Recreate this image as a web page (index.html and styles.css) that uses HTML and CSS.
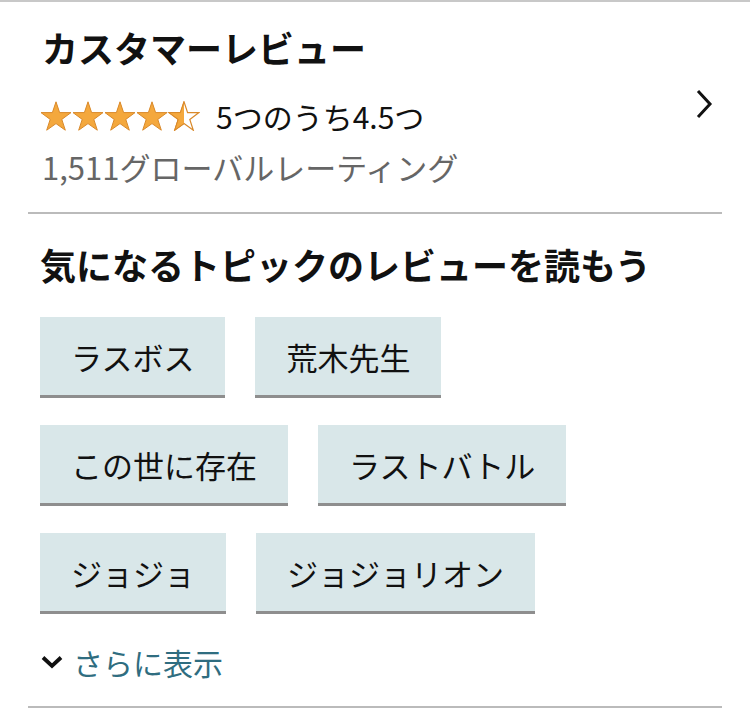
FILE: index.html
```html
<!DOCTYPE html>
<html lang="ja">
<head>
    <meta charset="UTF-8">
    <meta name="viewport" content="width=device-width, initial-scale=1.0">
    <title>カスタマーレビュー</title>
    <link rel="stylesheet" href="styles.css">
</head>
<body>
    <div class="reviews">
        <div class="summary">
            <h2 class="title">カスタマーレビュー</h2>
            <div class="rating-row">
                <div class="rating">
                    <svg class="stars" width="160" height="30" viewBox="0 0 160 30">
                        <defs>
                            <path id="star" d="M16 0.8 L19.6 11.6 L31 11.6 L21.8 18.4 L25.3 29.2 L16 22.6 L6.7 29.2 L10.2 18.4 L1 11.6 L12.4 11.6 Z"/>
                            <clipPath id="half"><rect x="0" y="0" width="16" height="30"/></clipPath>
                        </defs>
                        <use href="#star" class="star-full" x="0"/>
                        <use href="#star" class="star-full" x="32"/>
                        <use href="#star" class="star-full" x="64"/>
                        <use href="#star" class="star-full" x="96"/>
                        <g transform="translate(128 0)">
                            <use href="#star" class="star-empty"/>
                            <use href="#star" class="star-fill" clip-path="url(#half)"/>
                        </g>
                    </svg>
                    <span class="rating-text">5つのうち4.5つ</span>
                </div>
                <svg class="chevron" width="20" height="30" viewBox="0 0 20 30">
                    <path d="M4 2 L16 15 L4 28" fill="none" stroke="#111" stroke-width="3"/>
                </svg>
            </div>
            <div class="count">1,511グローバルレーティング</div>
        </div>

        <div class="topics">
            <h3 class="topics-title">気になるトピックのレビューを読もう</h3>
            <div class="chip-row">
                <span class="chip">ラスボス</span>
                <span class="chip">荒木先生</span>
            </div>
            <div class="chip-row">
                <span class="chip">この世に存在</span>
                <span class="chip">ラストバトル</span>
            </div>
            <div class="chip-row">
                <span class="chip">ジョジョ</span>
                <span class="chip">ジョジョリオン</span>
            </div>
            <a class="more" href="#">
                <svg width="24" height="16" viewBox="0 0 24 16">
                    <path d="M3 3.5 L12 12 L21 3.5" fill="none" stroke="#111" stroke-width="3.8"/>
                </svg>
                さらに表示
            </a>
        </div>
    </div>
</body>
</html>
```

FILE: styles.css
```css
body {
    margin: 0;
    font-family: "Noto Sans CJK JP", "Noto Sans", sans-serif;
    color: #111;
    background: #fff;
}
.reviews {
    border-top: 2px solid #c8c8c8;
    padding: 0 28px;
}
.summary {
    padding: 22px 8px 25px 14px;
    border-bottom: 2px solid #bbb;
}
.title {
    margin: 0;
    font-size: 36px;
    font-weight: bold;
    line-height: 46px;
}
.rating-row {
    display: flex;
    align-items: center;
    justify-content: space-between;
    margin-top: 27px;
}
.rating {
    display: flex;
    align-items: center;
}
.stars {
    margin-left: -2px;
}
.star-full, .star-fill {
    fill: #f4a83d;
    stroke: #d9892a;
    stroke-width: 1;
}
.star-empty {
    fill: #fff;
    stroke: #d9892a;
    stroke-width: 1.2;
}
.rating-text {
    margin-left: 16px;
    font-size: 30px;
    line-height: 38px;
}
.chevron {
    margin-top: -24px;
}
.count {
    margin-top: 12px;
    font-size: 31px;
    line-height: 40px;
    color: #666;
}
.topics {
    padding: 27px 0 0 12px;
    border-bottom: 2px solid #bbb;
}
.topics-title {
    margin: 0;
    font-size: 36px;
    font-weight: bold;
    line-height: 46px;
}
.chip-row {
    display: flex;
    gap: 30px;
    margin-top: 27px;
}
.chip-row:first-of-type {
    margin-top: 30px;
}
.chip {
    display: flex;
    align-items: center;
    height: 78px;
    padding: 0 31px;
    font-size: 31px;
    background: #d9e7e9;
    border-bottom: 3px solid #8e8e8e;
}
.more {
    display: flex;
    align-items: center;
    gap: 9px;
    padding: 28px 0 24px;
    font-size: 30px;
    line-height: 40px;
    color: #2f6d80;
    text-decoration: none;
}
```
